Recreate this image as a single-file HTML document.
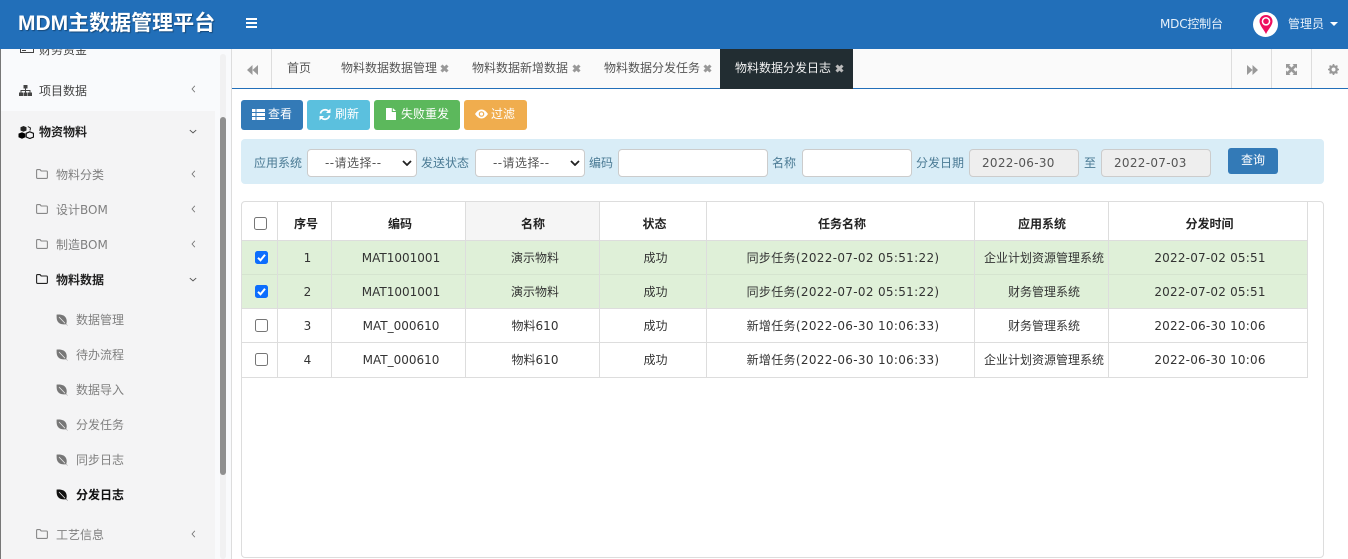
<!DOCTYPE html>
<html lang="zh">
<head>
<meta charset="utf-8">
<title>MDM</title>
<style>
*{box-sizing:border-box}
html,body{margin:0;padding:0;width:1348px;height:559px;overflow:hidden;background:#fff;font-family:"DejaVu Sans","Noto Sans CJK SC",sans-serif;font-size:12px;color:#333}
.a{position:absolute;white-space:nowrap}
.t{position:absolute;white-space:nowrap;line-height:16px}
svg{position:absolute;display:block}
.side{color:#808080}
.btn{position:absolute;top:100px;height:30px;border-radius:3px;color:#fff;line-height:29px;white-space:nowrap}
.lab{position:absolute;top:155px;line-height:16px;color:#4a7a94;white-space:nowrap}
.sel{position:absolute;top:149px;width:110px;height:28px;border:1px solid #ccc;border-radius:4px;background:#fff;color:#555;line-height:26px;padding-left:17px;letter-spacing:.45px}
.inp{position:absolute;top:149px;height:28px;border:1px solid #ccc;border-radius:4px;background:#fff;color:#555;line-height:26px;letter-spacing:.3px}
.tab{position:absolute;top:60px;line-height:16px;color:#555;white-space:nowrap}
.x{position:absolute;top:64px;width:9px;height:9px}
.vl{position:absolute;width:1px;background:#ddd}
.hl{position:absolute;height:1px;background:#ddd}
.c{position:absolute;text-align:center;line-height:16px;white-space:nowrap;color:#333}
.h{font-weight:bold;color:#222}
.d{letter-spacing:.2px}
.k{letter-spacing:.32px}
.cb{position:absolute;width:13px;height:13px;border:1px solid #767676;border-radius:2.5px;background:#fff}
.cb.on{background:#0d6efd;border-color:#0d6efd}
</style>
</head>
<body>
<svg width="0" height="0" style="position:absolute"><defs>
<symbol id="folder" viewBox="0 0 12 10"><path d="M.6 1.6Q.6.6 1.6.6H4L5.2 2H10.400Q11.400 2 11.400 3V8.400Q11.400 9.400 10.400 9.400H1.6Q.6 9.400.6 8.400Z" fill="none" stroke="currentColor" stroke-width="1.100"/></symbol>
<symbol id="leaf" viewBox="0 0 12 12"><path d="M.6.6C5 .2 9.500 1 10.500 5.500 11 8 10.500 9.500 10 10.200 6 10.800 2.800 10 1.300 6.800 .5 4.800 .6 3 .6 .6Z" fill="currentColor"/><path d="M3 3 9 9.300" stroke="#f4f4f5" stroke-width=".7"/><path d="M9.800 9.800 11.600 11.600" stroke="currentColor" stroke-width=".6" opacity=".6"/></symbol>
<symbol id="left" viewBox="0 0 6 10"><path d="M4.700 1 1.200 5 4.700 9" fill="none" stroke="currentColor" stroke-width="1.100"/></symbol>
<symbol id="down" viewBox="0 0 10 6"><path d="M1 1.200 5 4.700 9 1.200" fill="none" stroke="currentColor" stroke-width="1.200"/></symbol>
<symbol id="xx" viewBox="0 0 9 9"><path d="M1.500 1.500 7.500 7.500M7.500 1.500 1.500 7.500" stroke="currentColor" stroke-width="3"/></symbol>
<symbol id="chev" viewBox="0 0 10 6"><path d="M1 1 5 5 9 1" fill="none" stroke="#222" stroke-width="1.800"/></symbol>
<symbol id="chk" viewBox="0 0 13 13"><path d="M3 6.800 5.500 9.300 10 3.800" fill="none" stroke="#fff" stroke-width="2"/></symbol>
</defs></svg>

<!-- sidebar -->
<div class="a" style="left:0;top:49px;width:231px;height:510px;background:#f9fafc"></div>
<div class="a" style="left:1px;top:111px;width:214px;height:448px;background:#f4f4f5"></div>
<div class="a" style="left:0;top:49px;width:1px;height:510px;background:#777"></div>
<div class="a" style="left:231px;top:49px;width:1px;height:510px;background:#ddd"></div>
<div class="a" style="left:220px;top:54px;width:6px;height:505px;background:#f1f1f2;border-radius:3px"></div>
<div class="a" style="left:220px;top:117px;width:6px;height:358px;background:#8f8f8f;border-radius:3px"></div>

<svg style="left:20px;top:45px;color:#444" width="14" height="10" viewBox="0 0 14 10"><rect x=".5" y="-2" width="13" height="9.500" fill="none" stroke="currentColor"/><path d="M2 5.500H6" stroke="currentColor"/></svg>
<div class="t" style="left:39px;top:42px;color:#444">财务资金</div>
<div class="a" style="left:0;top:0;width:231px;height:49px;background:#226fb9;z-index:2"></div>

<svg style="left:19px;top:85px" width="13" height="11" viewBox="0 0 13 11"><path d="M4.500 0H8.500V3.500H7V5H11.500V7.500H13V11H9V7.500H10.500V6H7V7.500H8.500V11H4.500V7.500H6V6H2.500V7.500H4V11H0V7.500H1.500V5H6V3.500H4.500Z" fill="#444"/></svg>
<div class="t" style="left:39px;top:83px;color:#444">项目数据</div>
<svg style="left:191px;top:85px;color:#777" width="5" height="8"><use href="#left"/></svg>

<svg style="left:18px;top:125px" width="16" height="14" viewBox="0 0 16 14"><path d="M5.500 1 8.500 2.200V5.500L5.500 6.800 2.500 5.500V2.200Z" fill="#222"/><path d="M4 7.200 7.300 8.600V12.300L4 13.700.500 12.300V8.600Z" fill="#000"/><path d="M11.800 6.800 15.500 8.300V12L11.800 13.500 8.200 12V8.300Z" fill="none" stroke="#111" stroke-width="1.200"/><path d="M9.800 1.500 12.500 3 12 5.500" fill="none" stroke="#222"/></svg>
<div class="t" style="left:39px;top:124px;color:#222;font-weight:bold">物资物料</div>
<svg style="left:189px;top:129px;color:#555" width="8" height="5"><use href="#down"/></svg>

<svg style="left:36px;top:169px;color:#888" width="12" height="10"><use href="#folder"/></svg>
<div class="t side" style="left:56px;top:167px">物料分类</div>
<svg style="left:191px;top:170px;color:#777" width="5" height="8"><use href="#left"/></svg>

<svg style="left:36px;top:204px;color:#888" width="12" height="10"><use href="#folder"/></svg>
<div class="t side" style="left:56px;top:202px">设计BOM</div>
<svg style="left:191px;top:205px;color:#777" width="5" height="8"><use href="#left"/></svg>

<svg style="left:36px;top:239px;color:#888" width="12" height="10"><use href="#folder"/></svg>
<div class="t side" style="left:56px;top:237px">制造BOM</div>
<svg style="left:191px;top:240px;color:#777" width="5" height="8"><use href="#left"/></svg>

<svg style="left:36px;top:274px;color:#222" width="12" height="10"><use href="#folder"/></svg>
<div class="t" style="left:56px;top:272px;color:#222;font-weight:bold">物料数据</div>
<svg style="left:189px;top:277px;color:#555" width="8" height="5"><use href="#down"/></svg>

<svg style="left:56px;top:314px;color:#777" width="12" height="12"><use href="#leaf"/></svg>
<div class="t side" style="left:76px;top:312px">数据管理</div>
<svg style="left:56px;top:349px;color:#777" width="12" height="12"><use href="#leaf"/></svg>
<div class="t side" style="left:76px;top:347px">待办流程</div>
<svg style="left:56px;top:384px;color:#777" width="12" height="12"><use href="#leaf"/></svg>
<div class="t side" style="left:76px;top:382px">数据导入</div>
<svg style="left:56px;top:419px;color:#777" width="12" height="12"><use href="#leaf"/></svg>
<div class="t side" style="left:76px;top:417px">分发任务</div>
<svg style="left:56px;top:454px;color:#777" width="12" height="12"><use href="#leaf"/></svg>
<div class="t side" style="left:76px;top:452px">同步日志</div>
<svg style="left:56px;top:489px;color:#111" width="12" height="12"><use href="#leaf"/></svg>
<div class="t" style="left:76px;top:487px;color:#111;font-weight:bold">分发日志</div>

<svg style="left:36px;top:529px;color:#888" width="12" height="10"><use href="#folder"/></svg>
<div class="t side" style="left:56px;top:527px">工艺信息</div>
<svg style="left:191px;top:530px;color:#777" width="5" height="8"><use href="#left"/></svg>

<!-- header -->
<div class="a" style="left:0;top:0;width:1348px;height:49px;background:#226fb9;z-index:2"></div>
<div class="a" style="left:18px;top:9px;z-index:3;color:#fff;font:bold 21px/30px 'Liberation Sans','Noto Sans CJK SC',sans-serif;text-shadow:1px 1px 1px rgba(0,0,0,.35)">MDM主数据管理平台</div>
<svg style="left:246px;top:18px;z-index:3" width="11" height="10" viewBox="0 0 11 10"><path d="M0 0H11V2H0ZM0 4H11V6H0ZM0 8H11V10H0Z" fill="#fff"/></svg>
<div class="t" style="left:1160px;top:16px;z-index:3;color:#e8f1fa;letter-spacing:-.2px">MDC控制台</div>
<div class="a" style="left:1253px;top:12px;width:25px;height:25px;border-radius:50%;background:#fff;z-index:3"></div>
<svg style="left:1258px;top:14px;z-index:4" width="16" height="21" viewBox="0 0 16 21"><path d="M8 1C4 1 1.500 4 1.500 7.200 1.500 11.500 6 15.500 8 20 10 15.500 14.500 11.500 14.500 7.200 14.500 4 12 1 8 1Z" fill="#ee0f5f"/><circle cx="8" cy="7.300" r="4.300" fill="#fff"/><circle cx="8" cy="7.300" r="2.800" fill="#ee0f5f"/></svg>
<div class="t" style="left:1288px;top:16px;z-index:3;color:#e8f1fa">管理员</div>
<div class="a" style="left:1330px;top:22px;width:0;height:0;border:4px solid transparent;border-top:4px solid #fff;border-bottom:0;z-index:3"></div>

<!-- tabs -->
<div class="a" style="left:232px;top:49px;width:1116px;height:39px;background:#fafafa"></div>
<div class="a" style="left:232px;top:88px;width:1116px;height:1px;background:#226fb9"></div>
<div class="vl" style="left:271px;top:49px;height:39px;background:#ddd"></div>
<svg style="left:247px;top:65px" width="11" height="10" viewBox="0 0 11 10"><path d="M5.500 0V10L0 5ZM11 0V10L5.500 5Z" fill="#999"/></svg>
<div class="tab" style="left:287px">首页</div>
<div class="tab" style="left:341px">物料数据数据管理</div>
<svg class="x" style="left:440px;color:#999"><use href="#xx"/></svg>
<div class="tab" style="left:472px">物料数据新增数据</div>
<svg class="x" style="left:572px;color:#999"><use href="#xx"/></svg>
<div class="tab" style="left:604px">物料数据分发任务</div>
<svg class="x" style="left:703px;color:#999"><use href="#xx"/></svg>
<div class="a" style="left:720px;top:49px;width:133px;height:40px;background:#222d32"></div>
<div class="tab" style="left:735px;color:#f2f2f2">物料数据分发日志</div>
<svg class="x" style="left:835px;color:#bbb"><use href="#xx"/></svg>
<div class="vl" style="left:1231px;top:49px;height:39px"></div>
<div class="vl" style="left:1271px;top:49px;height:39px"></div>
<div class="vl" style="left:1311px;top:49px;height:39px"></div>
<svg style="left:1247px;top:65px" width="11" height="10" viewBox="0 0 11 10"><path d="M0 0V10L5.500 5ZM5.500 0V10L11 5Z" fill="#999"/></svg>
<svg style="left:1286px;top:64px" width="11" height="11" viewBox="0 0 11 11"><path d="M0 0H4.500L3.200 1.300 5.500 3.600 7.800 1.300 6.500 0H11V4.500L9.700 3.200 7.400 5.500 9.700 7.800 11 6.500V11H6.500L7.800 9.700 5.500 7.400 3.200 9.700 4.500 11H0V6.500L1.300 7.800 3.600 5.500 1.300 3.200 0 4.500Z" fill="#999"/></svg>
<svg style="left:1328px;top:64px" width="11" height="11" viewBox="0 0 11 11"><circle cx="5.500" cy="5.500" r="3.200" fill="none" stroke="#999" stroke-width="2.400"/><path d="M5.500 0V2M5.500 9V11M0 5.500H2M9 5.500H11M1.600 1.600 3 3M8 8 9.400 9.400M9.400 1.600 8 3M3 8 1.600 9.400" stroke="#999" stroke-width="1.600"/></svg>

<!-- buttons -->
<div class="btn" style="left:241px;width:62px;background:#337ab7"><svg style="left:11px;top:9px" width="13" height="11" viewBox="0 0 13 11"><path d="M0 0H3.500V3H0ZM4.500 0H13V3H4.500ZM0 4H3.500V7H0ZM4.500 4H13V7H4.500ZM0 8H3.500V11H0ZM4.500 8H13V11H4.500Z" fill="#fff"/></svg><span style="position:absolute;left:27px">查看</span></div>
<div class="btn" style="left:307px;width:63px;background:#5bc0de"><svg style="left:12px;top:8px" width="12" height="13" viewBox="0 0 12 13"><path d="M1.500 5.500A4.700 4.700 0 0 1 9.500 3.200M10.500 7.500A4.700 4.700 0 0 1 2.500 9.800" fill="none" stroke="#fff" stroke-width="1.700"/><path d="M11.500 .5V5H7ZM.5 12.500V8H5Z" fill="#fff"/></svg><span style="position:absolute;left:28px">刷新</span></div>
<div class="btn" style="left:374px;width:86px;background:#5cb85c"><svg style="left:12px;top:8px" width="10" height="12" viewBox="0 0 10 12"><path d="M0 0H5.800V4H10V12H0ZM6.800 0 10 3H6.800Z" fill="#fff"/></svg><span style="position:absolute;left:27px">失败重发</span></div>
<div class="btn" style="left:464px;width:63px;background:#f0ad4e"><svg style="left:11px;top:9px" width="13" height="10" viewBox="0 0 13 10"><path d="M0 5Q3 .5 6.500 .5T13 5Q10 9.500 6.500 9.500T0 5Z" fill="#fff"/><circle cx="6.500" cy="5" r="2.800" fill="#f0ad4e"/><circle cx="6.500" cy="5" r="1.600" fill="#fff"/></svg><span style="position:absolute;left:27px">过滤</span></div>

<!-- filter bar -->
<div class="a" style="left:241px;top:139px;width:1083px;height:45px;background:#d9edf7;border-radius:4px"></div>
<div class="lab" style="left:254px">应用系统</div>
<div class="sel" style="left:307px">--请选择--<svg style="left:94px;top:10px" width="10" height="6"><use href="#chev"/></svg></div>
<div class="lab" style="left:421px">发送状态</div>
<div class="sel" style="left:475px">--请选择--<svg style="left:94px;top:10px" width="10" height="6"><use href="#chev"/></svg></div>
<div class="lab" style="left:589px">编码</div>
<div class="inp" style="left:618px;width:150px"></div>
<div class="lab" style="left:772px">名称</div>
<div class="inp" style="left:802px;width:110px"></div>
<div class="lab" style="left:916px">分发日期</div>
<div class="inp" style="left:969px;width:110px;background:#eee;padding-left:12px">2022-06-30</div>
<div class="lab" style="left:1084px">至</div>
<div class="inp" style="left:1101px;width:110px;background:#eee;padding-left:12px">2022-07-03</div>
<div class="a" style="left:1228px;top:148px;width:50px;height:26px;background:#337ab7;border-radius:3px;color:#fff;text-align:center;line-height:25px">查询</div>

<!-- table -->
<div class="a" style="left:241px;top:201px;width:1083px;height:357px;border:1px solid #ddd;border-radius:4px"></div>
<div class="a" style="left:466px;top:202px;width:134px;height:38px;background:#f5f5f5"></div>
<div class="a" style="left:242px;top:241px;width:1066px;height:68px;background:#dff0d8"></div>
<div class="hl" style="left:242px;top:240px;width:1066px"></div>
<div class="hl" style="left:242px;top:274px;width:1066px;background:#d5e4cf"></div>
<div class="hl" style="left:242px;top:308px;width:1066px"></div>
<div class="hl" style="left:242px;top:342px;width:1066px"></div>
<div class="hl" style="left:242px;top:377px;width:1066px"></div>
<div class="vl" style="left:277px;top:202px;height:175px"></div>
<div class="vl" style="left:331px;top:202px;height:175px"></div>
<div class="vl" style="left:465px;top:202px;height:175px"></div>
<div class="vl" style="left:599px;top:202px;height:175px"></div>
<div class="vl" style="left:706px;top:202px;height:175px"></div>
<div class="vl" style="left:974px;top:202px;height:175px"></div>
<div class="vl" style="left:1108px;top:202px;height:175px"></div>
<div class="vl" style="left:1307px;top:202px;height:175px"></div>

<div class="cb" style="left:254px;top:217px"></div>
<div class="c h" style="left:278px;top:216px;width:56px">序号</div>
<div class="c h" style="left:332px;top:216px;width:136px">编码</div>
<div class="c h" style="left:466px;top:216px;width:134px">名称</div>
<div class="c h" style="left:600px;top:216px;width:109px">状态</div>
<div class="c h" style="left:707px;top:216px;width:270px">任务名称</div>
<div class="c h" style="left:975px;top:216px;width:134px">应用系统</div>
<div class="c h" style="left:1109px;top:216px;width:201px">分发时间</div>

<div class="cb on" style="left:255px;top:251px"><svg style="left:-1px;top:-1px" width="13" height="13"><use href="#chk"/></svg></div>
<div class="c" style="left:278px;top:250px;width:59px">1</div>
<div class="c" style="left:332px;top:250px;width:138px">MAT1001001</div>
<div class="c" style="left:466px;top:250px;width:138px">演示物料</div>
<div class="c" style="left:600px;top:250px;width:111px">成功</div>
<div class="c k" style="left:707px;top:250px;width:272px">同步任务(2022-07-02 05:51:22)</div>
<div class="c" style="left:975px;top:250px;width:138px">企业计划资源管理系统</div>
<div class="c d" style="left:1109px;top:250px;width:202px">2022-07-02 05:51</div>

<div class="cb on" style="left:255px;top:285px"><svg style="left:-1px;top:-1px" width="13" height="13"><use href="#chk"/></svg></div>
<div class="c" style="left:278px;top:284px;width:59px">2</div>
<div class="c" style="left:332px;top:284px;width:138px">MAT1001001</div>
<div class="c" style="left:466px;top:284px;width:138px">演示物料</div>
<div class="c" style="left:600px;top:284px;width:111px">成功</div>
<div class="c k" style="left:707px;top:284px;width:272px">同步任务(2022-07-02 05:51:22)</div>
<div class="c" style="left:975px;top:284px;width:138px">财务管理系统</div>
<div class="c d" style="left:1109px;top:284px;width:202px">2022-07-02 05:51</div>

<div class="cb" style="left:255px;top:319px"></div>
<div class="c" style="left:278px;top:318px;width:59px">3</div>
<div class="c" style="left:332px;top:318px;width:138px">MAT_000610</div>
<div class="c" style="left:466px;top:318px;width:138px">物料610</div>
<div class="c" style="left:600px;top:318px;width:111px">成功</div>
<div class="c k" style="left:707px;top:318px;width:272px">新增任务(2022-06-30 10:06:33)</div>
<div class="c" style="left:975px;top:318px;width:138px">财务管理系统</div>
<div class="c d" style="left:1109px;top:318px;width:202px">2022-06-30 10:06</div>

<div class="cb" style="left:255px;top:353px"></div>
<div class="c" style="left:278px;top:352px;width:59px">4</div>
<div class="c" style="left:332px;top:352px;width:138px">MAT_000610</div>
<div class="c" style="left:466px;top:352px;width:138px">物料610</div>
<div class="c" style="left:600px;top:352px;width:111px">成功</div>
<div class="c k" style="left:707px;top:352px;width:272px">新增任务(2022-06-30 10:06:33)</div>
<div class="c" style="left:975px;top:352px;width:138px">企业计划资源管理系统</div>
<div class="c d" style="left:1109px;top:352px;width:202px">2022-06-30 10:06</div>
</body>
</html>
